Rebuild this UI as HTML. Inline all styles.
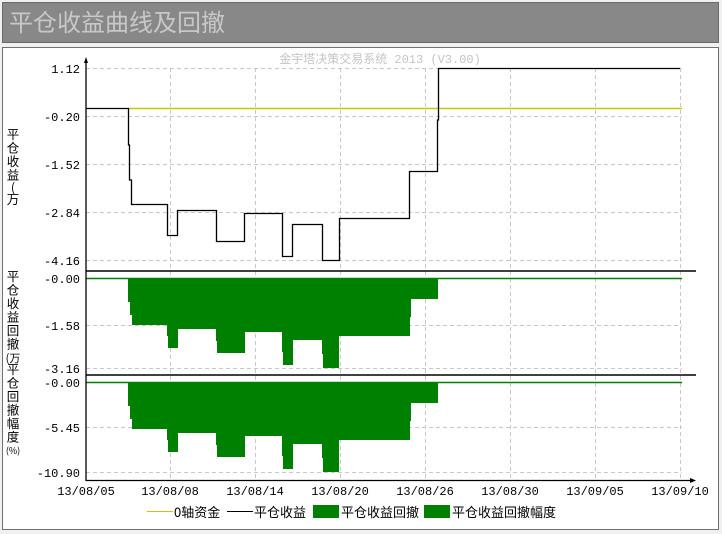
<!DOCTYPE html>
<html><head><meta charset="utf-8"><style>
body{margin:0;background:#f0f0f0;width:722px;height:534px;overflow:hidden;font-family:"Liberation Sans","Noto Sans CJK SC",sans-serif}
</style></head><body>
<svg width="722" height="534" xmlns="http://www.w3.org/2000/svg" style="position:absolute;left:0;top:0">
<rect x="0" y="0" width="722" height="534" fill="#f0f0f0"/>
<rect x="2.5" y="2.5" width="716" height="40" fill="#888888" stroke="#6a6a6a"/>
<text x="9" y="31" font-size="24" fill="#c8c8c8" font-family="Noto Sans CJK SC,sans-serif">平仓收益曲线及回撤</text>
<rect x="2.5" y="47.5" width="716" height="482" fill="#fff" stroke="#707070"/>
<text x="380" y="63" font-size="12" fill="#c4c4c4" text-anchor="middle" font-family="Liberation Mono,Noto Sans CJK SC,monospace">金宇塔决策交易系统 2013 (V3.00)</text>
<g stroke="#c8c8c8" stroke-dasharray="4,3" stroke-width="1">
<path d="M86 68.5H682M86 116.5H682M86 164.5H682M86 212.5H682M86 260.5H682"/>
<path d="M86 325.5H682M86 368.5H682M86 427.5H682M86 472.5H682"/>
<path d="M170.5 68V480M255.5 68V480M340.5 68V480M425.5 68V480M510.5 68V480M595.5 68V480M680.5 68V480"/>
</g>
<path d="M128 108.5H682" stroke="#c8c800" stroke-width="1.5"/>
<path d="M86 108.5H128.5V145H129.5V180H131.5V204.5H167.5V235.5H177.5V210.5H216.5V241.5H244.5V213.5H282.5V256.5H292.5V224.5H322.5V260.5H339.5V218.5H409.5V171.5H437.5V120H438.5V68.5H680" fill="none" stroke="#000" stroke-width="1.3"/>
<path d="M86 271H696M86 375H696" stroke="#000" stroke-width="1.5"/>
<path d="M86 278.5H682" stroke="#008000" stroke-width="1.5"/>
<path d="M86 382.5H682" stroke="#008000" stroke-width="1.5"/>
<path d="M128 278V302H130V315H132V325H167V336H168V348H178V329H216V341H217V353H245V332H282V352H283V365H293V340H322V354H323V368H339V336H410V317H411V299H438V279H439V278Z" fill="#008000"/>
<path d="M128 382V406H130V419H132V429H167V440H168V452H178V433H216V445H217V457H245V436H282V456H283V469H293V444H322V458H323V472H339V440H410V421H411V403H438V383H439V382Z" fill="#008000"/>
<path d="M86 60V480.5H692" fill="none" stroke="#000" stroke-width="1.3"/>
<path d="M84 63L86 57L88 63Z" fill="#000"/>
<path d="M690 478L696 480.5L690 483Z" fill="#000"/>
<g font-size="12" font-family="Liberation Mono,monospace" fill="#000" text-anchor="end">
<text x="80" y="73">1.12</text>
<text x="80" y="121">-0.20</text>
<text x="80" y="169">-1.52</text>
<text x="80" y="217">-2.84</text>
<text x="80" y="265">-4.16</text>
<text x="80" y="283">-0.00</text>
<text x="80" y="330">-1.58</text>
<text x="80" y="373">-3.16</text>
<text x="80" y="387">-0.00</text>
<text x="80" y="432">-5.45</text>
<text x="80" y="477">-10.90</text>
</g>
<g font-size="12" font-family="Liberation Mono,monospace" fill="#000" text-anchor="middle">
<text x="86" y="495">13/08/05</text>
<text x="170" y="495">13/08/08</text>
<text x="255" y="495">13/08/14</text>
<text x="340" y="495">13/08/20</text>
<text x="425" y="495">13/08/26</text>
<text x="510" y="495">13/08/30</text>
<text x="595" y="495">13/09/05</text>
<text x="680" y="495">13/09/10</text>
</g>
<g font-size="12.5" fill="#000" text-anchor="middle" font-family="Noto Sans CJK SC,sans-serif">
<text x="13" y="139">平</text><text x="13" y="152.5">仓</text><text x="13" y="166">收</text><text x="13" y="179.5">益</text><text x="13" y="192">(</text><text x="13" y="204">万</text>
<text x="13" y="281">平</text><text x="13" y="294.5">仓</text><text x="13" y="308">收</text><text x="13" y="321.5">益</text><text x="13" y="335">回</text><text x="13" y="348.5">撤</text><text x="13" y="362" font-size="11">(万</text>
<text x="13" y="374">平</text><text x="13" y="387.5">仓</text><text x="13" y="401">回</text><text x="13" y="414.5">撤</text><text x="13" y="428">幅</text><text x="13" y="441.5">度</text><text x="13" y="454" font-size="9">(%)</text>
</g>
<path d="M147 511.5H173" stroke="#c8c800" stroke-width="1"/>
<path d="M227 511.5H253" stroke="#000" stroke-width="1"/>
<rect x="313" y="505" width="26" height="13" fill="#008000"/>
<rect x="424" y="505" width="26" height="13" fill="#008000"/>
<g font-size="13" fill="#000" font-family="Noto Sans CJK SC,sans-serif">
<text x="174" y="517">0轴资金</text>
<text x="254" y="517">平仓收益</text>
<text x="341" y="517">平仓收益回撤</text>
<text x="452" y="517">平仓收益回撤幅度</text>
</g>
</svg>
</body></html>
